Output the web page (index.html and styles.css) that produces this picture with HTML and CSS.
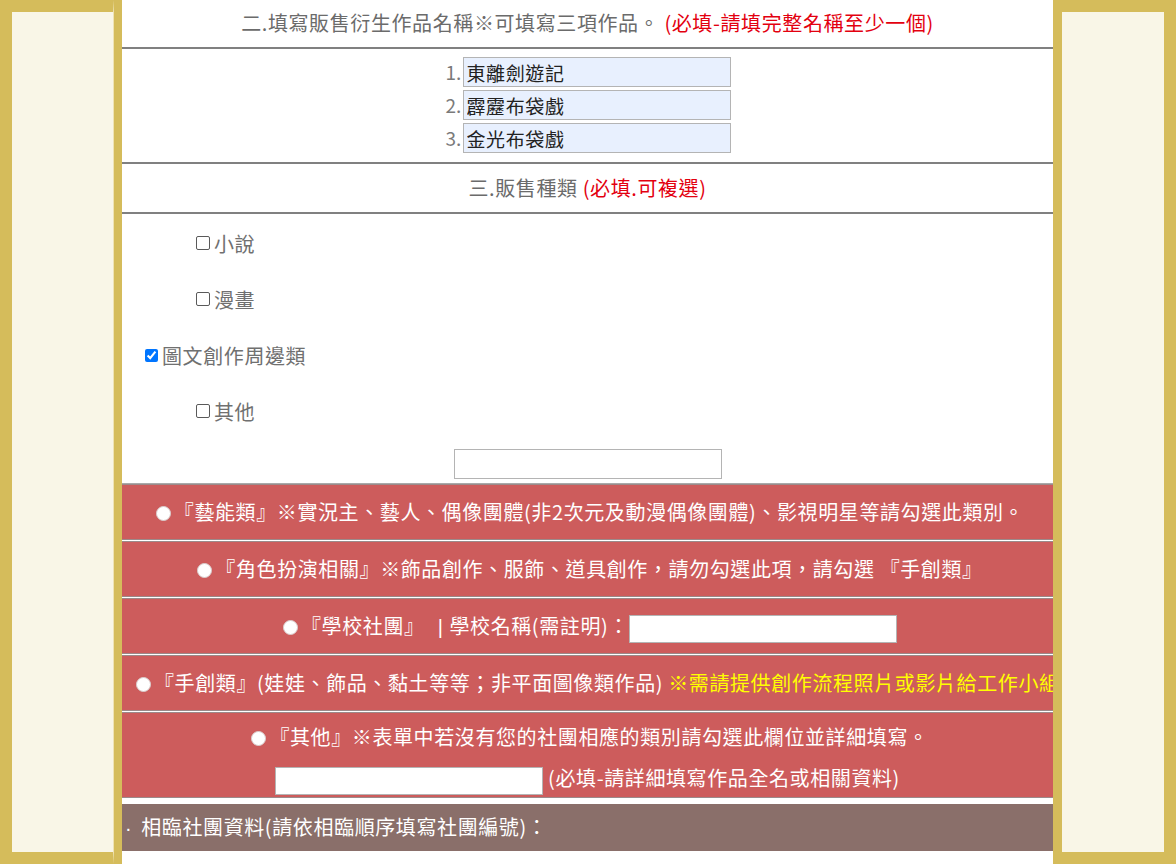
FILE: index.html
```html
<!DOCTYPE html>
<html lang="zh-Hant">

<head>
    <meta charset="UTF-8">
    <meta name="viewport" content="width=device-width, initial-scale=1.0">
    <title>販售作品登記</title>
    <link rel="stylesheet" href="styles.css">
</head>

<body>

    <div class="frame">
        <aside class="side side-left"></aside>

        <main class="sheet">
            <div class="title-row">
                二.填寫販售衍生作品名稱※可填寫三項作品。 <span class="must">(必填-請填完整名稱至少一個)</span>
            </div>

            <div class="names-row">
                <div class="name-line"><span class="num">1.</span><input type="text" class="name-input" value="東離劍遊記"></div>
                <div class="name-line"><span class="num">2.</span><input type="text" class="name-input" value="霹靂布袋戲"></div>
                <div class="name-line"><span class="num">3.</span><input type="text" class="name-input" value="金光布袋戲"></div>
            </div>

            <div class="title-row title-short">
                三.販售種類 <span class="must">(必填.可複選)</span>
            </div>

            <div class="types">
                <label class="opt"><input type="checkbox" class="box">小說</label>
                <label class="opt"><input type="checkbox" class="box">漫畫</label>
                <label class="opt opt-wide"><input type="checkbox" checked>圖文創作周邊類</label>
                <label class="opt"><input type="checkbox" class="box">其他</label>
                <div class="other-line"><input type="text" class="plain-input"></div>
            </div>

            <div class="cats">
                <div class="cat"><span class="dot"></span>『藝能類』※實況主、藝人、偶像團體(非2次元及動漫偶像團體)、影視明星等請勾選此類別。</div>
                <div class="cat"><span class="dot"></span>『角色扮演相關』※飾品創作、服飾、道具創作，請勿勾選此項，請勾選 『手創類』</div>
                <div class="cat"><span class="dot"></span>『學校社團』 <span class="bar">|</span>學校名稱(需註明)：<input type="text" class="plain-input school-input"></div>
                <div class="cat cat-left"><span class="dot"></span>『手創類』(娃娃、飾品、黏土等等；非平面圖像類作品) <span class="warn">※需請提供創作流程照片或影片給工作小組</span></div>
                <div class="cat cat-tall">
                    <div class="cat-line"><span class="dot"></span>『其他』※表單中若沒有您的社團相應的類別請勾選此欄位並詳細填寫。</div>
                    <div class="cat-line cat-input-line"><input type="text" class="plain-input"> (必填-請詳細填寫作品全名或相關資料)</div>
                </div>
            </div>

            <div class="near-bar"><span class="bullet">·</span>相臨社團資料(請依相臨順序填寫社團編號)：</div>
        </main>

        <aside class="side side-right"></aside>
    </div>

</body>

</html>
```

FILE: styles.css
```css
* {
    margin: 0;
    padding: 0;
    box-sizing: border-box;
}

body {
    font-family: "Noto Sans CJK TC", "Noto Sans", sans-serif;
    font-size: 20px;
    letter-spacing: 0.6px;
    color: #6b6b6b;
    background: #d5bc5b;
    height: 864px;
    overflow: hidden;
}

.frame {
    display: grid;
    grid-template-columns: 114px 948px 114px;
    height: 864px;
}

.side {
    background-color: #f9f6e7;
    border: 12px solid #d5bc5b;
}

.side-left {
    border-right: 1px solid #efe3b4;
}

.side-right {
    border-left: none;
}

.sheet {
    background-color: #fff;
    border-left: 8px solid #d5bc5b;
    border-right: 9px solid #d5bc5b;
    overflow: hidden;
    height: 864px;
}

/* section titles */
.title-row {
    height: 49px;
    line-height: 46px;
    text-align: center;
    border-bottom: 2px solid #808080;
    white-space: nowrap;
}

.title-short {
    height: 50px;
    line-height: 48px;
}

.must {
    color: #e3000f;
}

/* work names */
.names-row {
    height: 115px;
    border-bottom: 2px solid #808080;
    padding-top: 8px;
    display: flex;
    flex-direction: column;
    align-items: center;
    gap: 3px;
}

.name-line {
    display: flex;
    align-items: center;
    padding-left: 1px;
}

.num {
    width: 17px;
    font-size: 19px;
    color: #7a7a7a;
    line-height: 30px;
    letter-spacing: 0;
}

.name-input {
    width: 268px;
    height: 30px;
    border: 1px solid #b4b4b4;
    background-color: #e8f0fe;
    padding: 0 3px;
    font-family: inherit;
    font-size: 19px;
    letter-spacing: 0.6px;
    color: #222;
    outline: none;
}

.plain-input {
    width: 268px;
    height: 30px;
    border: 1px solid #b4b4b4;
    background-color: #fff;
    font-family: inherit;
    font-size: 18px;
    outline: none;
    vertical-align: middle;
}

/* sale types */
.types {
    height: 270px;
    border-bottom: 1px solid #a9a9a9;
    padding-top: 1px;
}

.opt {
    display: flex;
    align-items: center;
    height: 56px;
    padding-left: 70px;
    color: #707070;
}

.opt input {
    width: 13px;
    height: 13px;
    margin: 0 4px 0 4px;
}

.opt .box {
    appearance: none;
    width: 14px;
    height: 14px;
    border: 1.5px solid #5a5a5a;
    border-radius: 2px;
    background-color: #fff;
    margin: 0 4px 0 4px;
}

.opt-wide {
    padding-left: 19px;
}

.other-line {
    text-align: center;
    padding-top: 7px;
}

/* category rows */
.cats {
    display: flex;
    flex-direction: column;
    gap: 1px;
}

.cat {
    background-color: #cd5c5c;
    color: #fff;
    border-top: 1px solid #9c8a8a;
    border-bottom: 1px solid #9c8a8a;
    height: 56px;
    line-height: 53px;
    text-align: center;
    white-space: nowrap;
    padding: 0 9px;
}

.cat-left {
    text-align: left;
}

.cat-tall {
    height: 86px;
    line-height: normal;
    padding-top: 5px;
}

.cat-line {
    height: 38px;
    line-height: 38px;
}

.cat-input-line {
    margin-top: 4px;
    height: 36px;
    line-height: 36px;
}

.cat-input-line .plain-input {
    height: 28px;
}

.school-input {
    height: 28px;
}

.bar {
    font-family: "Liberation Sans", sans-serif;
    margin: 0 6px 0 8px;
}

.dot {
    display: inline-block;
    width: 15px;
    height: 15px;
    margin: 0 3px 0 5px;
    border-radius: 50%;
    background-color: #fff;
    border: 1px solid #d9cfcf;
    vertical-align: -1px;
}

.warn {
    color: #ffff00;
}

.near-bar {
    margin-top: 6px;
    height: 47px;
    line-height: 46px;
    background-color: #8a6f6a;
    color: #fff;
    padding-left: 3px;
    white-space: nowrap;
}

.bullet {
    font-family: "Liberation Sans", sans-serif;
    margin-right: 9px;
}
```
